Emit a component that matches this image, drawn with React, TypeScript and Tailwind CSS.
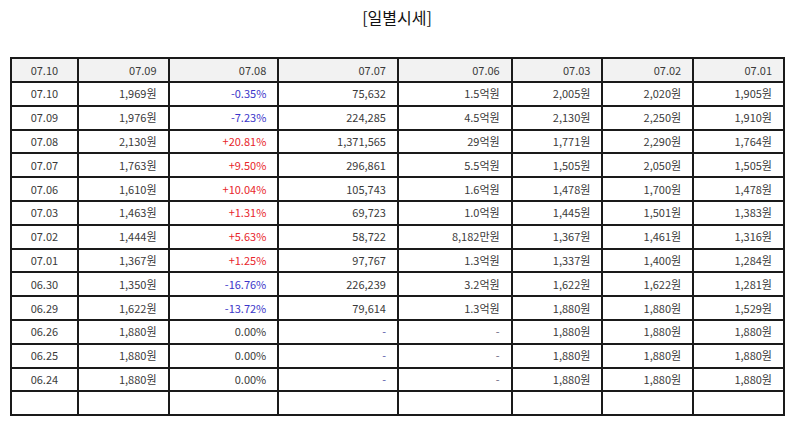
import React from "react";

const header = ["07.10", "07.09", "07.08", "07.07", "07.06", "07.03", "07.02", "07.01"];
const widths = [67, 91, 110, 120, 114, 91, 91, 91];

const raw: string[][] = [
  ["07.10", "1,969원", "-0.35%", "75,632", "1.5억원", "2,005원", "2,020원", "1,905원"],
  ["07.09", "1,976원", "-7.23%", "224,285", "4.5억원", "2,130원", "2,250원", "1,910원"],
  ["07.08", "2,130원", "+20.81%", "1,371,565", "29억원", "1,771원", "2,290원", "1,764원"],
  ["07.07", "1,763원", "+9.50%", "296,861", "5.5억원", "1,505원", "2,050원", "1,505원"],
  ["07.06", "1,610원", "+10.04%", "105,743", "1.6억원", "1,478원", "1,700원", "1,478원"],
  ["07.03", "1,463원", "+1.31%", "69,723", "1.0억원", "1,445원", "1,501원", "1,383원"],
  ["07.02", "1,444원", "+5.63%", "58,722", "8,182만원", "1,367원", "1,461원", "1,316원"],
  ["07.01", "1,367원", "+1.25%", "97,767", "1.3억원", "1,337원", "1,400원", "1,284원"],
  ["06.30", "1,350원", "-16.76%", "226,239", "3.2억원", "1,622원", "1,622원", "1,281원"],
  ["06.29", "1,622원", "-13.72%", "79,614", "1.3억원", "1,880원", "1,880원", "1,529원"],
  ["06.26", "1,880원", "0.00%", "-", "-", "1,880원", "1,880원", "1,880원"],
  ["06.25", "1,880원", "0.00%", "-", "-", "1,880원", "1,880원", "1,880원"],
  ["06.24", "1,880원", "0.00%", "-", "-", "1,880원", "1,880원", "1,880원"],
  ["", "", "", "", "", "", "", ""],
];

function colorOf(v: string, i: number) {
  if (i === 2 && v.startsWith("+")) return "text-[#e8262c]";
  if (i === 2 && v.startsWith("-")) return "text-[#3b36c9]";
  if (v === "-" && i === 3) return "text-[#5a5aa8]";
  if (v === "-") return "text-[#666680]";
  return "text-[#3a3a3a]";
}

export default function App() {
  return (
    <div className="w-[794px] h-[425px] bg-white overflow-hidden" style={{ fontFamily: '"Noto Sans CJK KR", "Noto Sans", sans-serif' }}>
      <div className="h-[57px] pt-[5px] text-center text-[16px] text-[#111] leading-[24px]">[일별시세]</div>
      <div className="ml-[10px] w-[775px]">
        <table className="w-full table-fixed border-collapse text-[11px] text-[#3a3a3a]">
          <colgroup>
            {widths.map((w, i) => (
              <col key={i} style={{ width: `${(w / 775) * 100}%` }} />
            ))}
          </colgroup>
          <thead>
            <tr className="h-[24px] bg-[#f2f2f2]">
              {header.map((h, i) => (
                <th
                  key={i}
                  className={`border-2 border-[#1a1a1a] font-normal p-0 leading-none ${i === 0 ? "text-center" : "text-right pr-[11px]"}`}
                >
                  {h}
                </th>
              ))}
            </tr>
          </thead>
          <tbody>
            {raw.map((row, r) => (
              <tr key={r} className="h-[23.8px]">
                {row.map((v, i) => (
                  <td
                    key={i}
                    className={`border-2 border-[#1a1a1a] p-0 leading-none ${i === 0 ? "text-center" : "text-right pr-[11px]"} ${colorOf(v, i)}`}
                  >
                    {v}
                  </td>
                ))}
              </tr>
            ))}
          </tbody>
        </table>
      </div>
    </div>
  );
}
